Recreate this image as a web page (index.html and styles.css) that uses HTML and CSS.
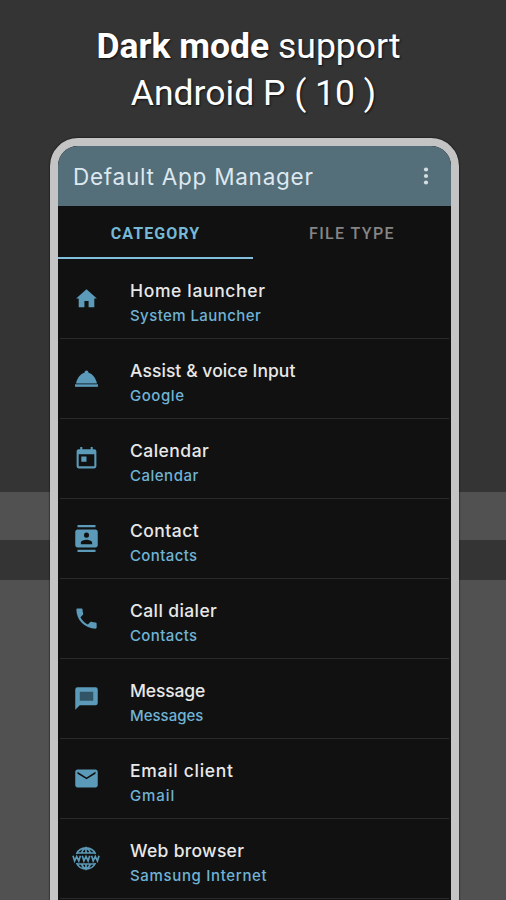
FILE: index.html
```html
<!DOCTYPE html>
<html lang="en">
<head>
<meta charset="utf-8">
<title>Default App Manager</title>
<link rel="stylesheet" href="styles.css">
</head>
<body>
<main class="promo">
  <h1 class="headline"><span class="line"><b>Dark mode</b> support</span><span class="line version">Android P ( 10 )</span></h1>
  <section class="phone">
    <header class="appbar">
      <span class="title">Default App Manager</span>
      <svg class="more" viewBox="0 0 6 20"><circle cx="3" cy="3.500" r="2.1"/><circle cx="3" cy="10" r="2.1"/><circle cx="3" cy="16.500" r="2.1"/></svg>
    </header>
    <nav class="tabs"><span class="tab active"><span>CATEGORY</span></span><span class="tab"><span>FILE TYPE</span></span></nav>
    <ul class="list">
      <li class="row"><svg class="icon" viewBox="0 0 24 24"><path d="M10 20.500v-6h4v6h5.500v-8.500h2.500L12 3 2 12h2.500v8.500z"/></svg><div class="text"><span class="name home">Home launcher</span><span class="app sys">System Launcher</span></div></li>
      <li class="row"><svg class="icon" viewBox="0 0 24 24"><path d="M1 17.500h22v2.500H1z"/><path d="M13.700 6.200c.3-1.300-.5-2-1.700-2s-2 .7-1.700 2C6 7.500 3 12 2 16.300h20c-1-4.300-4-8.800-8.300-10.100z"/><path class="dim" d="M2 16.300h20v1.200H2z"/></svg><div class="text"><span class="name assist">Assist &amp; voice Input</span><span class="app goog">Google</span></div></li>
      <li class="row"><svg class="icon" viewBox="0 0 24 24"><path d="M19.500 3H18V1h-2v2H8V1H6v2H4.500a2 2 0 0 0-2 2v14.500a2 2 0 0 0 2 2h15a2 2 0 0 0 2-2V5a2 2 0 0 0-2-2zm0 16.500h-15V8h15v11.500zM7 10h5v5H7z"/></svg><div class="text"><span class="name cal">Calendar</span><span class="app cal-app">Calendar</span></div></li>
      <li class="row"><svg class="icon contact" viewBox="0 0 24 24"><path d="M20 0H4v2h16V0zM4 24h16v-2H4v2zM20 4H4c-1.100 0-2 .9-2 2v12c0 1.100.9 2 2 2h16c1.100 0 2-.9 2-2V6c0-1.100-.9-2-2-2zm-8 2.750a2.250 2.250 0 1 1 0 4.500 2.250 2.250 0 0 1 0-4.500zM17 17H7v-1.500c0-1.670 3.330-2.500 5-2.500s5 .83 5 2.500V17z"/></svg><div class="text"><span class="name con">Contact</span><span class="app con-app">Contacts</span></div></li>
      <li class="row"><svg class="icon contact" viewBox="0 0 24 24"><path d="M6.620 10.790c1.440 2.830 3.760 5.140 6.590 6.590l2.200-2.200c.27-.27.67-.36 1.020-.24 1.120.37 2.330.57 3.570.57.550 0 1 .45 1 1V20c0 .55-.45 1-1 1-9.390 0-17-7.610-17-17 0-.55.450-1 1-1h3.500c.55 0 1 .45 1 1 0 1.250.2 2.450.57 3.570.11.350.030.740-.25 1.020l-2.200 2.200z"/></svg><div class="text"><span class="name call">Call dialer</span><span class="app con-app">Contacts</span></div></li>
      <li class="row"><svg class="icon contact" viewBox="0 0 24 24"><path class="dim" d="M5 5h14v10H5z"/><path fill-rule="evenodd" d="M20 2H4a2 2 0 0 0-2 2v18l4-4h14a2 2 0 0 0 2-2V4a2 2 0 0 0-2-2zM6 6h12v8H6z"/></svg><div class="text"><span class="name mes">Message</span><span class="app mes-app">Messages</span></div></li>
      <li class="row"><svg class="icon contact" viewBox="0 0 24 24"><path d="M20 4H4c-1.100 0-2 .9-2 2v12c0 1.100.9 2 2 2h16c1.100 0 2-.9 2-2V6c0-1.100-.9-2-2-2zm0 3.700-8 5-8-5V6l8 5 8-5z"/></svg><div class="text"><span class="name email">Email client</span><span class="app gmail">Gmail</span></div></li>
      <li class="row"><svg class="icon globe" viewBox="0 0 28 24"><g class="stroke"><path d="M4.500 7.500a10.500 10.500 0 0 1 19 0M4.500 16.500a10.500 10.500 0 0 0 19 0M5 6.500h18M5 17.500h18M14 1v5M14 18v5M9.500 7q1-4 4.500-6 3.500 2 4.500 6M9.500 17q1 4 4.500 6 3.500-2 4.500-6"/><path d="m1 9.300 1.600 5.200L4.700 10l2.100 4.500 1.600-5.200M10.300 9.300l1.600 5.200L14 10l2.100 4.500 1.600-5.200M19.600 9.300l1.600 5.200 2.100-4.500 2.100 4.500 1.600-5.200"/></g></svg><div class="text"><span class="name web">Web browser</span><span class="app sam">Samsung Internet</span></div></li>
    </ul>
  </section>
</main>
</body>
</html>
```
FILE: styles.css
```css
* { box-sizing: border-box; }
body { margin: 0; }
.promo {
  width: 506px; height: 900px; overflow: hidden;
  display: flex; flex-direction: column; align-items: center;
  background: linear-gradient(#343434 0 492px, #515151 492px 540px, #343434 540px 580px, #515151 580px);
}
.headline {
  height: 138px; margin: 0; padding: 23px 9px 0 0; flex: none;
  display: flex; flex-direction: column; align-items: center;
  font: 400 35.5px/47px Roboto, sans-serif; color: #fff;
  text-shadow: 1px 1px 2px #111;
}
.line { white-space: pre; }
.version { padding-left: 10px; }
.headline b { font-weight: 700; }
.phone {
  width: 409px; height: 790px; flex: none; margin-left: 3px;
  border: 8px solid #c4c4c4; border-radius: 28px 28px 0 0;
  background: #111; overflow: hidden;
  box-shadow: 0 0 2px #000;
  font-family: Inter, sans-serif;
}
.appbar {
  height: 60px; padding: 0 22px 0 15px;
  display: flex; align-items: center; justify-content: space-between;
  background: #546e7a; color: #dde8ef;
}
.title { font-size: 22.5px; letter-spacing: .75px; white-space: nowrap; }
.more { width: 6px; height: 20px; fill: #d3dde2; }
.tabs { height: 53px; display: grid; grid-template-columns: 195px 198px; }
.tab {
  display: flex; align-items: center; justify-content: center; padding-top: 4px;
  border-bottom: 2px solid transparent;
  font: 500 16px Roboto, sans-serif; letter-spacing: 1.4px; color: #858585;
}
.active { color: #75b8d8; font-weight: 700; letter-spacing: 1.05px; border-color: #81bfdc; }
.list { list-style: none; margin: 0; padding: 0 2px; }
.row { height: 80px; display: flex; align-items: center; border-bottom: 1px solid #2a2a2a; }
.icon { width: 25px; height: 25px; margin: 0 31px 0 14px; fill: #5b9ab8; flex: none; }
.contact { width: 27px; height: 27px; margin: 0 30px 0 13px; }
.globe { width: 28px; margin: 0 30px 0 12px; }
.dim { fill: #315466; }
.stroke { fill: none; stroke: #5b9ab8; stroke-width: 1.700; }
.text { display: flex; flex-direction: column; white-space: nowrap; padding-top: 11px; }
.name { font-size: 17.5px; line-height: 24px; color: #e8e8e8; font-weight: 500; }
.app { font-size: 15px; line-height: 26px; color: #70b3d5; font-weight: 500; }
.home { letter-spacing: .65px; }
.assist { letter-spacing: .07px; }
.cal { letter-spacing: .47px; }
.con { letter-spacing: .45px; }
.call { letter-spacing: .4px; }
.mes { letter-spacing: -.15px; }
.email { letter-spacing: .7px; }
.web { letter-spacing: .3px; }
.sys { letter-spacing: .42px; }
.goog { letter-spacing: .55px; }
.cal-app { letter-spacing: .5px; }
.con-app { letter-spacing: .37px; }
.gmail { letter-spacing: .9px; }
.sam { letter-spacing: .66px; }
```
